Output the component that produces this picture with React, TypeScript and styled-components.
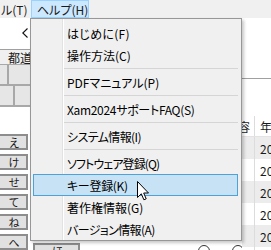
import styled, { createGlobalStyle } from "styled-components";

const GlobalStyle = createGlobalStyle`
  html, body {
    margin: 0;
    padding: 0;
    background: #fff;
  }
  body {
    font-family: "Noto Sans CJK JP", "Noto Sans", sans-serif;
    font-size: 12px;
    color: #1a1a1a;
    font-feature-settings: "palt";
  }
`;

const Screen = styled.div`
  position: relative;
  width: 271px;
  height: 250px;
  overflow: hidden;
  background: #fff;
`;

const MenuBar = styled.div`
  display: flex;
  height: 18px;
  background: #f0f0f0;
`;

const BarItem = styled.div<{ $active?: boolean; $w: number }>`
  box-sizing: border-box;
  display: flex;
  align-items: center;
  width: ${(p) => p.$w}px;
  height: 18px;
  padding: 0 5px;
  white-space: nowrap;
  border: 1px solid ${(p) => (p.$active ? "#99d1ff" : "transparent")};
  background: ${(p) => (p.$active ? "#cce8ff" : "transparent")};
`;

const Body = styled.div`
  display: grid;
  grid-template-columns: 30px 212px 29px;
  height: 232px;
`;

/* left side */
const LeftPane = styled.div`
  display: flex;
  flex-direction: column;
  overflow: hidden;
`;

const TopBlank = styled.div`
  height: 37px;
  box-sizing: border-box;
  border-bottom: 1px solid #a0a0a0;
  display: flex;
  justify-content: flex-end;
  padding: 10px 2px 0 0;
`;

const HeadCell = styled.div`
  height: 17px;
  background: #f0f0f0;
  display: flex;
  align-items: center;
  padding-left: 8px;
  white-space: nowrap;
  overflow: hidden;
`;

const CellGrid = styled.div`
  display: flex;
  flex-direction: column;
  gap: 2px;
  padding: 1px 0 2px;
  background: #a8a8a8;
`;

const CellRow = styled.div<{ $first: number }>`
  display: grid;
  grid-template-columns: ${(p) => p.$first}px 1fr;
  gap: 2px;
  height: 19px;
`;

const Cell = styled.div`
  background: #e6e6e6;
`;

const Spacer = styled.div<{ $h: number }>`
  height: ${(p) => p.$h}px;
  flex-shrink: 0;
`;

const KanaColumn = styled.div`
  display: flex;
  flex-direction: column;
  gap: 4px;
  margin-left: -2px;
  width: 30px;
`;

const KanaButton = styled.div<{ $w?: number }>`
  box-sizing: border-box;
  flex-shrink: 0;
  width: ${(p) => (p.$w ? `${p.$w}px` : "100%")};
  height: 16px;
  border: 2px solid #8d8d8d;
  background: #e1e1e1;
  display: flex;
  align-items: center;
  justify-content: center;
  font-size: 11px;
  padding-left: 2px;
`;

/* middle, mostly under the menu */
const CenterPane = styled.div`
  display: flex;
  flex-direction: column;
  justify-content: flex-end;
  background: #fff;
`;

const BottomRow = styled.div`
  height: 7px;
  display: flex;
  align-items: flex-start;
  padding-left: 3px;
`;

const Radio = styled.div<{ $gap: number }>`
  flex-shrink: 0;
  width: 10px;
  height: 10px;
  border: 1px solid #333;
  border-radius: 50%;
  margin-left: ${(p) => p.$gap}px;
  margin-top: 2px;
`;

/* right side table */
const RightPane = styled.div`
  display: flex;
  flex-direction: column;
  overflow: hidden;
`;

const RightTop = styled.div`
  height: 61px;
  box-sizing: border-box;
  border-bottom: 1px solid #a0a0a0;
  flex-shrink: 0;
`;

const TableRow = styled.div<{ $shade?: boolean; $head?: boolean }>`
  display: grid;
  grid-template-columns: 13px 1fr;
  height: ${(p) => (p.$head ? 20 : 22)}px;
  flex-shrink: 0;
  background: ${(p) => (p.$shade ? "#ececec" : "#fff")};
  border-bottom: ${(p) => (p.$head ? "1px solid #e3e3e3" : "none")};
`;

const TCell = styled.div<{ $end?: boolean }>`
  display: flex;
  align-items: center;
  justify-content: ${(p) => (p.$end ? "flex-end" : "flex-start")};
  padding: ${(p) => (p.$end ? "0 4px 0 0" : "0 0 0 5px")};
  border-right: ${(p) => (p.$end ? "1px solid #dcdcdc" : "none")};
  overflow: hidden;
  white-space: nowrap;
`;

/* dropdown menu */
const Dropdown = styled.div`
  position: absolute;
  left: 30px;
  top: 18px;
  width: 212px;
  box-sizing: border-box;
  border: 1px solid #979797;
  padding: 3px 3px 0 2px;
  background: linear-gradient(
    to right,
    #f0f0f0 31px,
    #e2e2e2 31px,
    #e2e2e2 32px,
    #fff 32px,
    #fff 33px,
    #f0f0f0 33px
  );
  box-shadow: 2px 2px 3px rgba(0, 0, 0, 0.22);
  color: #000;
`;

const Item = styled.div<{ $hot?: boolean; $squeeze: number }>`
  box-sizing: border-box;
  height: 22px;
  display: flex;
  align-items: center;
  padding-left: 33px;
  white-space: nowrap;
  letter-spacing: ${(p) => p.$squeeze}px;
  border: 1px solid ${(p) => (p.$hot ? "#4ea2da" : "transparent")};
  background: ${(p) => (p.$hot ? "#c6e2f4" : "transparent")};
`;

const Separator = styled.div`
  height: 1px;
  margin: 2px 0 2px 31px;
  background: #d5d5d5;
`;

const Pointer = styled.svg`
  position: absolute;
  left: 137px;
  top: 181px;
`;

type Entry = { label: string; hot?: boolean; squeeze?: number } | "sep";

const entries: Entry[] = [
  { label: "はじめに(F)", squeeze: 0.3 },
  { label: "操作方法(C)" },
  "sep",
  { label: "PDFマニュアル(P)" },
  "sep",
  { label: "Xam2024サポートFAQ(S)", squeeze: -0.3 },
  "sep",
  { label: "システム情報(I)", squeeze: -0.6 },
  "sep",
  { label: "ソフトウェア登録(Q)", squeeze: -0.9 },
  { label: "キー登録(K)", hot: true, squeeze: -0.3 },
  { label: "著作権情報(G)" },
  { label: "バージョン情報(A)", squeeze: -0.6 },
];

const kana = ["え", "け", "せ", "て", "ね", "へ"];

export default function App() {
  return (
    <Screen>
      <GlobalStyle />
      <MenuBar>
        <BarItem $w={31} style={{ paddingLeft: 0 }}>
          ル(T)
        </BarItem>
        <BarItem $w={58} $active>
          ヘルプ(H)
        </BarItem>
      </MenuBar>

      <Body>
        <LeftPane>
          <TopBlank>
            <svg width="6" height="10" viewBox="0 0 6 10">
              <polyline points="5.5,0.5 0.8,5 5.5,9.5" fill="none" stroke="#111" strokeWidth="1.1" />
            </svg>
          </TopBlank>
          <HeadCell>都道府県</HeadCell>
          <CellGrid>
            <CellRow $first={7}>
              <Cell />
              <Cell />
            </CellRow>
            <CellRow $first={13}>
              <Cell />
              <Cell />
            </CellRow>
          </CellGrid>
          <Spacer $h={27} />
          <KanaColumn>
            {kana.map((k) => (
              <KanaButton key={k}>{k}</KanaButton>
            ))}
          </KanaColumn>
        </LeftPane>

        <CenterPane>
          <BottomRow>
            <KanaButton $w={47}>ほ</KanaButton>
            <Radio $gap={118} />
            <Radio $gap={22} />
          </BottomRow>
        </CenterPane>

        <RightPane>
          <RightTop />
          <Spacer $h={37} />
          <TableRow $head>
            <TCell $end>容</TCell>
            <TCell>年</TCell>
          </TableRow>
          {[0, 1, 2, 3, 4, 5].map((i) => (
            <TableRow key={i} $shade={i % 2 === 0}>
              <TCell $end />
              <TCell>20</TCell>
            </TableRow>
          ))}
        </RightPane>
      </Body>

      <Dropdown>
        {entries.map((e, i) =>
          e === "sep" ? (
            <Separator key={i} />
          ) : (
            <Item key={i} $hot={e.hot} $squeeze={e.squeeze ?? 0}>
              {e.label}
            </Item>
          )
        )}
      </Dropdown>

      <Pointer width="13" height="20" viewBox="0 0 13 20">
        <path
          d="M0.5 0.5 L0.5 16.5 L4.3 12.8 L6.9 18.8 L9.2 17.8 L6.7 12 L11.5 12 Z"
          fill="#fff"
          stroke="#000"
          strokeWidth="1"
          strokeLinejoin="miter"
        />
      </Pointer>
    </Screen>
  );
}
